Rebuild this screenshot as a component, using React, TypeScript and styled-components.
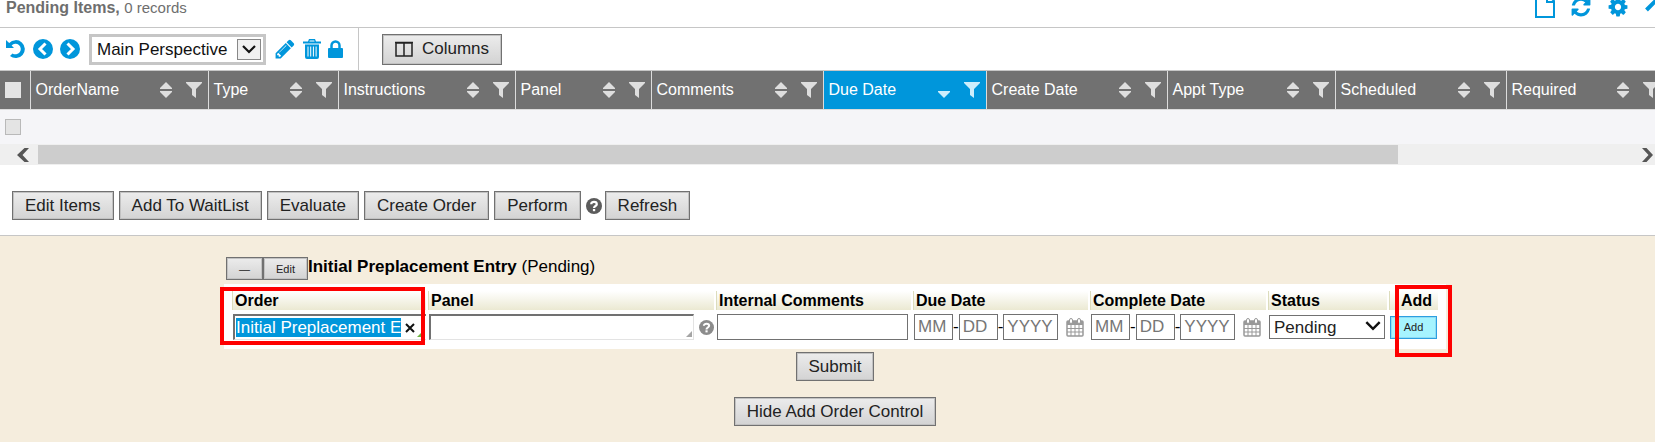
import React from 'react';
import styled, { createGlobalStyle, css } from 'styled-components';

const blue = '#0096db';

const GlobalStyle = createGlobalStyle`
  * { box-sizing: border-box; }
  body { margin: 0; background: #f5eddd; }
  body, button, input, select { font-family: "Liberation Sans", Arial, sans-serif; }
`;

const Page = styled.div`
  background: #fff;
  color: #000;
  overflow: hidden;
`;

const TitleBar = styled.header`
  display: flex;
  justify-content: space-between;
  height: 28px;
  padding: 0 0 12px 6px;
  border-bottom: 1px solid #c6c6c6;
  overflow: hidden;
`;

const Title = styled.h1`
  margin: 0;
  font-size: 16px;
  line-height: 15px;
  color: #6e6e6e;
  span { font-size: 15px; font-weight: 400; }
`;

const TitleActions = styled.div`
  display: flex;
  align-items: flex-end;
  gap: 15px;
  margin-right: -11px;
  height: 18px;
`;

const IconButton = styled.button`
  display: flex;
  flex: none;
  padding: 0;
  border: 0;
  background: none;
  color: ${blue};
  cursor: pointer;
  svg { display: block; fill: currentColor; }
`;

const Toolbar = styled.div`
  display: flex;
  align-items: center;
  height: 42px;
  padding-left: 6px;
`;

const ToolGroup = styled.div`
  display: flex;
  align-items: center;
  gap: 7px;
`;

const PerspectiveBox = styled.label`
  position: relative;
  display: flex;
  width: 177px;
  height: 31px;
  margin: 0 8px 0 9px;
  border: 3px solid #c6c6c6;
`;

const PerspectiveSelect = styled.select`
  appearance: none;
  width: 100%;
  padding: 0 0 0 5px;
  border: 0;
  background: #fff;
  font-size: 17px;
  color: #111;
`;

const DropMark = styled.span`
  position: absolute;
  top: 2px;
  right: 2px;
  display: grid;
  place-items: center;
  width: 24px;
  height: 21px;
  border: 1px solid #888;
  background: #f0f0f0;
  pointer-events: none;
`;

const ToolDivider = styled.div`
  align-self: stretch;
  width: 1px;
  margin: 0 23px 0 15px;
  background: #c6c6c6;
`;

const Button = styled.button<{ $small?: boolean; $tone?: 'cyan' }>`
  display: inline-flex;
  flex: none;
  align-items: center;
  justify-content: center;
  height: ${p => (p.$small ? 23 : 29)}px;
  padding: 0 12px;
  border: 1px solid #717171;
  background: linear-gradient(#ececec, #d3d3d3);
  box-shadow: inset 0 0 0 1px #c2c2c2;
  color: #222;
  font-size: ${p => (p.$small ? 11 : 17)}px;
  white-space: nowrap;
  ${p => p.$tone === 'cyan' && css`
    width: 47px;
    border-color: #2c9fe0;
    background: #a6f4ff;
    box-shadow: inset 0 0 0 1px #8fdcf5;
  `}
`;

const ColumnsButton = styled(Button)`
  height: 31px;
  gap: 9px;
`;

const GridViewport = styled.div`
  overflow: hidden;
  border-top: 1px solid #c6c6c6;
`;

const Grid = styled.table`
  width: 1665px;
  table-layout: fixed;
  border-collapse: collapse;
  background: #f5f5f8;
`;

const HeadCell = styled.th<{ $active?: boolean }>`
  height: 38px;
  padding: 0 6px 0 5px;
  border-right: 1px solid #dcdcdc;
  border-bottom: 1px solid #dcdcdc;
  background: ${p => (p.$active ? blue : '#717171')};
  color: #fff;
  font-size: 16px;
  font-weight: 400;
  text-align: left;
`;

const HeadInner = styled.div`
  display: flex;
  align-items: center;
  gap: 14px;
  > span { flex: 1; white-space: nowrap; }
`;

const BodyCell = styled.td`
  height: 35px;
  padding: 0 0 0 5px;
  border-top: 1px solid #818181;
`;

const Tick = styled.input<{ $plain?: boolean }>`
  appearance: none;
  display: block;
  width: 16px;
  height: 16px;
  margin: 0;
  border: 1px solid ${p => (p.$plain ? '#e4e4e4' : '#b9b9b9')};
  background: #e4e4e4;
`;

const ScrollBar = styled.div`
  display: flex;
  align-items: center;
  height: 21px;
  padding: 0 1px 0 17px;
  background: #efefef;
`;

const ScrollTrack = styled.div`
  flex: 1;
  height: 19px;
  margin: 0 4px 0 9px;
`;

const ScrollThumb = styled.div`
  width: 85%;
  height: 100%;
  background: #cdcdcd;
`;

const ActionBar = styled.div`
  display: flex;
  align-items: center;
  gap: 5px;
  padding: 26px 12px 15px;
  border-bottom: 1px solid #c6c6c6;
  > svg { margin: 0 -2px 0 0; }
`;

const OrderPanel = styled.main`
  display: flex;
  flex-direction: column;
  align-items: center;
  padding: 21px 0 17px 15px;
  background: #f5eddd;
`;

const OrderForm = styled.form`
  display: flex;
  flex-direction: column;
  align-items: center;
  gap: 16px;
`;

const OrderBlock = styled.section`
  margin-bottom: -13px;
`;

const OrderTitle = styled.div`
  display: flex;
  padding-left: 2px;
  font-size: 17px;
  line-height: 20px;
  h2 { margin: 0; font-size: inherit; }
`;

const Fields = styled.div`
  display: grid;
  grid-template-columns: 194px 286px 195px 175px 176px 119px 49px;
  column-gap: 2px;
  margin-top: 4px;
  padding: 7px 8px 9px;
  background: #fff;
`;

const Field = styled.div`
  position: relative;
  min-width: 0;
`;

const FieldName = styled.label`
  display: block;
  height: 19px;
  padding-left: 2px;
  border-left: 1px solid #dcdcbc;
  background: linear-gradient(#fff, #ebe9d2);
  font-size: 16px;
  font-weight: 700;
  line-height: 19px;
  white-space: nowrap;
`;

const FieldBody = styled.div`
  display: flex;
  align-items: center;
  height: 26px;
  margin: 4px 0 0 1px;
`;

const ComboBox = styled.div`
  position: relative;
  display: flex;
  flex: 1;
  align-items: center;
  height: 26px;
  border: solid #717171;
  border-width: 2px 0 1px 2px;
  border-bottom-color: #e3e3e3;
`;

const SelectedInput = styled.input`
  width: 165px;
  height: 19px;
  margin-left: 1px;
  padding: 0;
  border: 0;
  background: ${blue};
  color: #fff;
  font-size: 17px;
`;

const ClearButton = styled(IconButton)`
  margin-left: 4px;
  color: #111;
`;

const Corner = styled.span<{ $green?: boolean }>`
  position: absolute;
  right: ${p => (p.$green ? 3 : 1)}px;
  bottom: 2px;
  border: solid transparent;
  border-width: 3px;
  border-right-color: ${p => (p.$green ? '#6cb33f' : '#a5a5a5')};
  border-bottom-color: ${p => (p.$green ? '#6cb33f' : '#a5a5a5')};
`;

const PanelBox = styled(ComboBox)`
  flex: none;
  width: 265px;
  margin-right: 5px;
  border-width: 2px 1px 1px 2px;
  border-right-color: #e3e3e3;
`;

const BareInput = styled.input`
  width: 100%;
  height: 100%;
  padding: 0 4px;
  border: 0;
  background: transparent;
  font-size: 17px;
  outline: 0;
`;

const TextInput = styled.input<{ $w?: number }>`
  width: ${p => (p.$w ? `${p.$w}px` : '100%')};
  height: 26px;
  padding: 0 3px;
  border: 1px solid #717171;
  background: #fff;
  font-size: 17px;
  &::placeholder { color: #767676; opacity: 1; }
`;

const DateParts = styled(FieldBody)`
  font-size: 17px;
  > button { margin-left: 8px; }
`;

const StatusSelect = styled.select`
  appearance: none;
  width: 116px;
  height: 24px;
  padding: 0 4px;
  border: 1px solid #717171;
  background: #fff;
  color: #222;
  font-size: 17px;
`;

const StatusMark = styled.span`
  position: absolute;
  right: 6px;
  bottom: 9px;
  pointer-events: none;
  svg { display: block; }
`;

const Highlight = styled.div<{ $add?: boolean }>`
  position: absolute;
  pointer-events: none;
  border: 4px solid #fe0000;
  inset: ${p => (p.$add ? '-6px -14px -17px 6px' : '-4px 1px -5px -12px')};
`;

const FaIcon = ({ d, size }: { d: string; size: number }) => (
  <svg width={size} height={size} viewBox="0 0 1792 1792" aria-hidden="true"><path d={d} /></svg>
);

const pencilPath = 'M491 1536l91-91-235-235-91 91v107h128v128h107zm523-928q0-22-22-22-10 0-17 7l-542 542q-7 7-7 17 0 22 22 22 10 0 17-7l542-542q7-7 7-17zm-54-192l416 416-832 832h-416v-416zm683 96q0 53-37 90l-166 166-416-416 166-165q36-38 90-38 53 0 91 38l235 234q37 39 37 91z';
const refreshPath = 'M1639 1056q0 5-1 7-64 268-268 434.5t-478 166.5q-146 0-282.5-55t-243.5-157l-129 129q-19 19-45 19t-45-19-19-45v-448q0-26 19-45t45-19h448q26 0 45 19t19 45-19 45l-137 137q71 66 161 102t187 36q134 0 250-65t186-179q11-17 53-117 8-23 30-23h192q13 0 22.5 9.5t9.5 22.5zm25-800v448q0 26-19 45t-45 19h-448q-26 0-45-19t-19-45 19-45l138-138q-148-137-349-137-134 0-250 65t-186 179q-11 17-53 117-8 23-30 23h-199q-13 0-22.5-9.5t-9.5-22.5v-7q65-268 270-434.5t480-166.5q146 0 284 55.5t245 156.5l130-129q19-19 45-19t45 19 19 45z';
const gearPath = 'M1152 896q0-106-75-181t-181-75-181 75-75 181 75 181 181 75 181-75 75-181zm512-109v222q0 12-8 23t-20 13l-185 28q-19 54-39 91 35 50 107 138 10 12 10 25t-9 23q-27 37-99 108t-94 71q-12 0-26-9l-138-108q-44 23-91 38-16 136-29 186-7 28-36 28h-222q-14 0-24.5-8.5t-11.5-21.5l-28-184q-49-16-90-37l-141 107q-10 9-25 9-14 0-25-11-126-114-165-168-7-10-7-23 0-12 8-23 15-21 51-66.500t54-70.500q-27-50-41-99l-183-27q-13-2-21-12.500t-8-23.500v-222q0-12 8-23t19-13l186-28q14-46 39-92-40-57-107-138-10-12-10-24 0-10 9-23 26-36 98.500-107.500t94.500-71.500q13 0 26 10l138 107q44-23 91-38 16-136 29-186 7-28 36-28h222q14 0 24.500 8.500t11.500 21.500l28 184q49 16 90 37l142-107q9-9 24-9 13 0 25 10 129 119 165 170 7 8 7 22 0 12-8 23-15 21-51 66.500t-54 70.500q26 50 41 98l183 28q13 2 21 12.500t8 23.500z';

const UndoIcon = () => (
  <svg width="20" height="20" viewBox="0 0 20 20" aria-hidden="true">
    <path d="M0 1v8h8L5.600 6.400A5.300 5.300 0 1 1 6.500 14.400L4 17A9 9 0 1 0 3.200 4z" />
  </svg>
);

const CircleArrow = ({ flip }: { flip?: boolean }) => (
  <svg width="20" height="20" viewBox="0 0 20 20" aria-hidden="true">
    <circle cx="10" cy="10" r="10" />
    <path d={flip ? 'M7.500 4.500L13 10l-5.500 5.500' : 'M12.500 4.500L7 10l5.500 5.500'} fill="none" stroke="#fff" strokeWidth="3" />
  </svg>
);

const TrashIcon = () => (
  <svg width="18" height="20" viewBox="0 0 18 20" aria-hidden="true">
    <path fillRule="evenodd" d="M6 0h6l1 2.500h5v2H0v-2h5zM6.800 1.500l-.4 1h5.200l-.4-1zM2 5.500h14V18q0 2-2 2H4q-2 0-2-2zM4.500 7.500v10h1v-10zM7.200 7.500v10h1v-10zM9.900 7.500v10h1v-10zM12.600 7.500v10h1v-10z" />
  </svg>
);

const LockIcon = () => (
  <svg width="15" height="18" viewBox="0 0 15 18" aria-hidden="true">
    <path d="M3.500 9V5.500a4 4 0 0 1 8 0V9" fill="none" stroke="currentColor" strokeWidth="2.500" />
    <rect y="8" width="15" height="10" rx="1" />
  </svg>
);

const FileIcon = () => (
  <svg width="20" height="24" viewBox="0 0 20 24" aria-hidden="true">
    <path d="M1 1h12l6 6v16H1zM12 1v7h7" fill="none" stroke="currentColor" strokeWidth="2" />
  </svg>
);

const CollapseIcon = () => (
  <svg width="22" height="22" viewBox="0 0 22 22" aria-hidden="true">
    <path d="M2.500 14L11 5.500l8.500 8.500" fill="none" stroke="currentColor" strokeWidth="4" />
  </svg>
);

const SortIcon = ({ down }: { down?: boolean }) => (
  <svg width="12" height="16" viewBox="0 0 12 16" fill="#dedede" aria-hidden="true">
    {!down && <path d="M6 0l6 6v1H0V6z" />}
    <path d={down ? 'M0 9h12v1l-6 6-6-6z' : 'M0 9h12v1l-6 6-6-6z'} fill={down ? '#cdeefc' : undefined} />
  </svg>
);

const FilterIcon = ({ active }: { active?: boolean }) => (
  <svg width="16" height="16" viewBox="0 0 16 16" fill={active ? '#cdeefc' : '#dedede'} aria-hidden="true">
    <path d="M0 0h16v1l-6 6v9l-4-3V7L0 1z" />
  </svg>
);

const HelpIcon = ({ color, size }: { color: string; size: number }) => (
  <svg width={size} height={size} viewBox="0 0 16 16" aria-hidden="true">
    <circle cx="8" cy="8" r="8" fill={color} />
    <path d="M5.200 6.200C5.200 3.200 10.800 3.200 10.800 6.200C10.800 8 8 8 8 10" fill="none" stroke="#fff" strokeWidth="2.200" />
    <rect x="6.900" y="11" width="2.300" height="2.200" fill="#fff" />
  </svg>
);

const CalendarIcon = () => (
  <svg width="18" height="19" viewBox="0 0 18 19" aria-hidden="true">
    <rect x="1" y="3" width="16" height="15" rx="1" fill="#fff" stroke="#999" strokeWidth="1.500" />
    <rect x="1" y="3" width="16" height="4" fill="#999" />
    <path d="M1 10.500h16M1 14h16M5 7v11M9 7v11M13 7v11" stroke="#999" />
    <rect x="3.500" y=".5" width="3" height="5" rx="1.500" fill="#fff" stroke="#999" />
    <rect x="11.500" y=".5" width="3" height="5" rx="1.500" fill="#fff" stroke="#999" />
  </svg>
);

const Chevron = ({ w, h }: { w: number; h: number }) => (
  <svg width={w} height={h} viewBox="0 0 14 9" aria-hidden="true">
    <path d="M1 1l6 6 6-6" fill="none" stroke="#111" strokeWidth="2.200" />
  </svg>
);

const ScrollArrow = ({ right }: { right?: boolean }) => (
  <svg width="12" height="14" viewBox="0 0 12 14" aria-hidden="true">
    <path d={right ? 'M0 0h4.500l6.500 7-6.500 7H0l6.500-7z' : 'M12 0H7.500L0 7l7.500 7H12L5.500 7z'} fill="#555" />
  </svg>
);

const columns = [
  { name: 'OrderName', width: 178 },
  { name: 'Type', width: 130 },
  { name: 'Instructions', width: 177 },
  { name: 'Panel', width: 136 },
  { name: 'Comments', width: 172 },
  { name: 'Due Date', width: 163, active: true },
  { name: 'Create Date', width: 181 },
  { name: 'Appt Type', width: 168 },
  { name: 'Scheduled', width: 171 },
  { name: 'Required', width: 159 },
];

const DateField = ({ id, name }: { id: string; name: string }) => (
  <Field>
    <FieldName htmlFor={id}>{name}</FieldName>
    <DateParts>
      <TextInput id={id} $w={39} placeholder="MM" />-
      <TextInput $w={39} placeholder="DD" aria-label={`${name} day`} />-
      <TextInput $w={55} placeholder="YYYY" aria-label={`${name} year`} />
      <IconButton type="button" aria-label={`Pick ${name}`}><CalendarIcon /></IconButton>
    </DateParts>
  </Field>
);

export default function App() {
  return (
    <Page>
      <GlobalStyle />
      <TitleBar>
        <Title>Pending Items, <span>0 records</span></Title>
        <TitleActions>
          <IconButton aria-label="New"><FileIcon /></IconButton>
          <IconButton aria-label="Refresh list"><FaIcon d={refreshPath} size={22} /></IconButton>
          <IconButton aria-label="Settings"><FaIcon d={gearPath} size={22} /></IconButton>
          <IconButton aria-label="Collapse list"><CollapseIcon /></IconButton>
        </TitleActions>
      </TitleBar>

      <Toolbar>
        <ToolGroup>
          <IconButton aria-label="Undo"><UndoIcon /></IconButton>
          <IconButton aria-label="Previous"><CircleArrow /></IconButton>
          <IconButton aria-label="Next"><CircleArrow flip /></IconButton>
        </ToolGroup>
        <PerspectiveBox>
          <PerspectiveSelect aria-label="Perspective"><option>Main Perspective</option></PerspectiveSelect>
          <DropMark><Chevron w={14} h={9} /></DropMark>
        </PerspectiveBox>
        <ToolGroup>
          <IconButton aria-label="Edit perspective"><FaIcon d={pencilPath} size={22} /></IconButton>
          <IconButton aria-label="Delete perspective"><TrashIcon /></IconButton>
          <IconButton aria-label="Lock perspective"><LockIcon /></IconButton>
        </ToolGroup>
        <ToolDivider />
        <ColumnsButton>
          <svg width="18" height="16" viewBox="0 0 18 16" aria-hidden="true">
            <path d="M1 2h16v13H1zM9 2v13M0 1.500h18" fill="none" stroke="#222" strokeWidth="1.500" />
          </svg>
          Columns
        </ColumnsButton>
      </Toolbar>

      <GridViewport>
        <Grid>
          <colgroup>
            <col width={30} />
            {columns.map(c => <col key={c.name} width={c.width} />)}
          </colgroup>
          <thead>
            <tr>
              <HeadCell><Tick type="checkbox" $plain aria-label="Select all" /></HeadCell>
              {columns.map(c => (
                <HeadCell key={c.name} $active={c.active}>
                  <HeadInner>
                    <span>{c.name}</span>
                    <SortIcon down={c.active} />
                    <FilterIcon active={c.active} />
                  </HeadInner>
                </HeadCell>
              ))}
            </tr>
          </thead>
          <tbody>
            <tr>
              <BodyCell colSpan={11}><Tick type="checkbox" aria-label="Select row" /></BodyCell>
            </tr>
          </tbody>
        </Grid>
      </GridViewport>
      <ScrollBar>
        <ScrollArrow />
        <ScrollTrack><ScrollThumb /></ScrollTrack>
        <ScrollArrow right />
      </ScrollBar>

      <ActionBar>
        <Button>Edit Items</Button>
        <Button>Add To WaitList</Button>
        <Button>Evaluate</Button>
        <Button>Create Order</Button>
        <Button>Perform</Button>
        <HelpIcon color="#5c5c5c" size={16} />
        <Button>Refresh</Button>
      </ActionBar>

      <OrderPanel>
        <OrderForm onSubmit={e => e.preventDefault()}>
          <OrderBlock>
            <OrderTitle>
              <Button type="button" $small aria-label="Collapse">—</Button>
              <Button type="button" $small>Edit</Button>
              <h2>Initial Preplacement Entry</h2>&nbsp;(Pending)
            </OrderTitle>
            <Fields>
              <Field>
                <FieldName htmlFor="order">Order</FieldName>
                <FieldBody>
                  <ComboBox>
                    <SelectedInput id="order" defaultValue="Initial Preplacement Entry" />
                    <ClearButton type="button" aria-label="Clear order">
                      <svg width="10" height="10" viewBox="0 0 10 10"><path d="M1 1l8 8M9 1L1 9" stroke="#111" strokeWidth="2" /></svg>
                    </ClearButton>
                    <Corner $green />
                  </ComboBox>
                </FieldBody>
                <Highlight />
              </Field>
              <Field>
                <FieldName htmlFor="panel">Panel</FieldName>
                <FieldBody>
                  <PanelBox><BareInput id="panel" /><Corner /></PanelBox>
                  <HelpIcon color="#8c8c8c" size={15} />
                </FieldBody>
              </Field>
              <Field>
                <FieldName htmlFor="comments">Internal Comments</FieldName>
                <FieldBody><TextInput id="comments" $w={191} /></FieldBody>
              </Field>
              <DateField id="due" name="Due Date" />
              <DateField id="complete" name="Complete Date" />
              <Field>
                <FieldName htmlFor="status">Status</FieldName>
                <FieldBody>
                  <StatusSelect id="status"><option>Pending</option></StatusSelect>
                  <StatusMark><Chevron w={16} h={10} /></StatusMark>
                </FieldBody>
              </Field>
              <Field>
                <FieldName as="div">&nbsp;&nbsp;Add</FieldName>
                <FieldBody><Button type="button" $small $tone="cyan">Add</Button></FieldBody>
                <Highlight $add />
              </Field>
            </Fields>
          </OrderBlock>
          <Button type="submit">Submit</Button>
          <Button type="button">Hide Add Order Control</Button>
        </OrderForm>
      </OrderPanel>
    </Page>
  );
}
